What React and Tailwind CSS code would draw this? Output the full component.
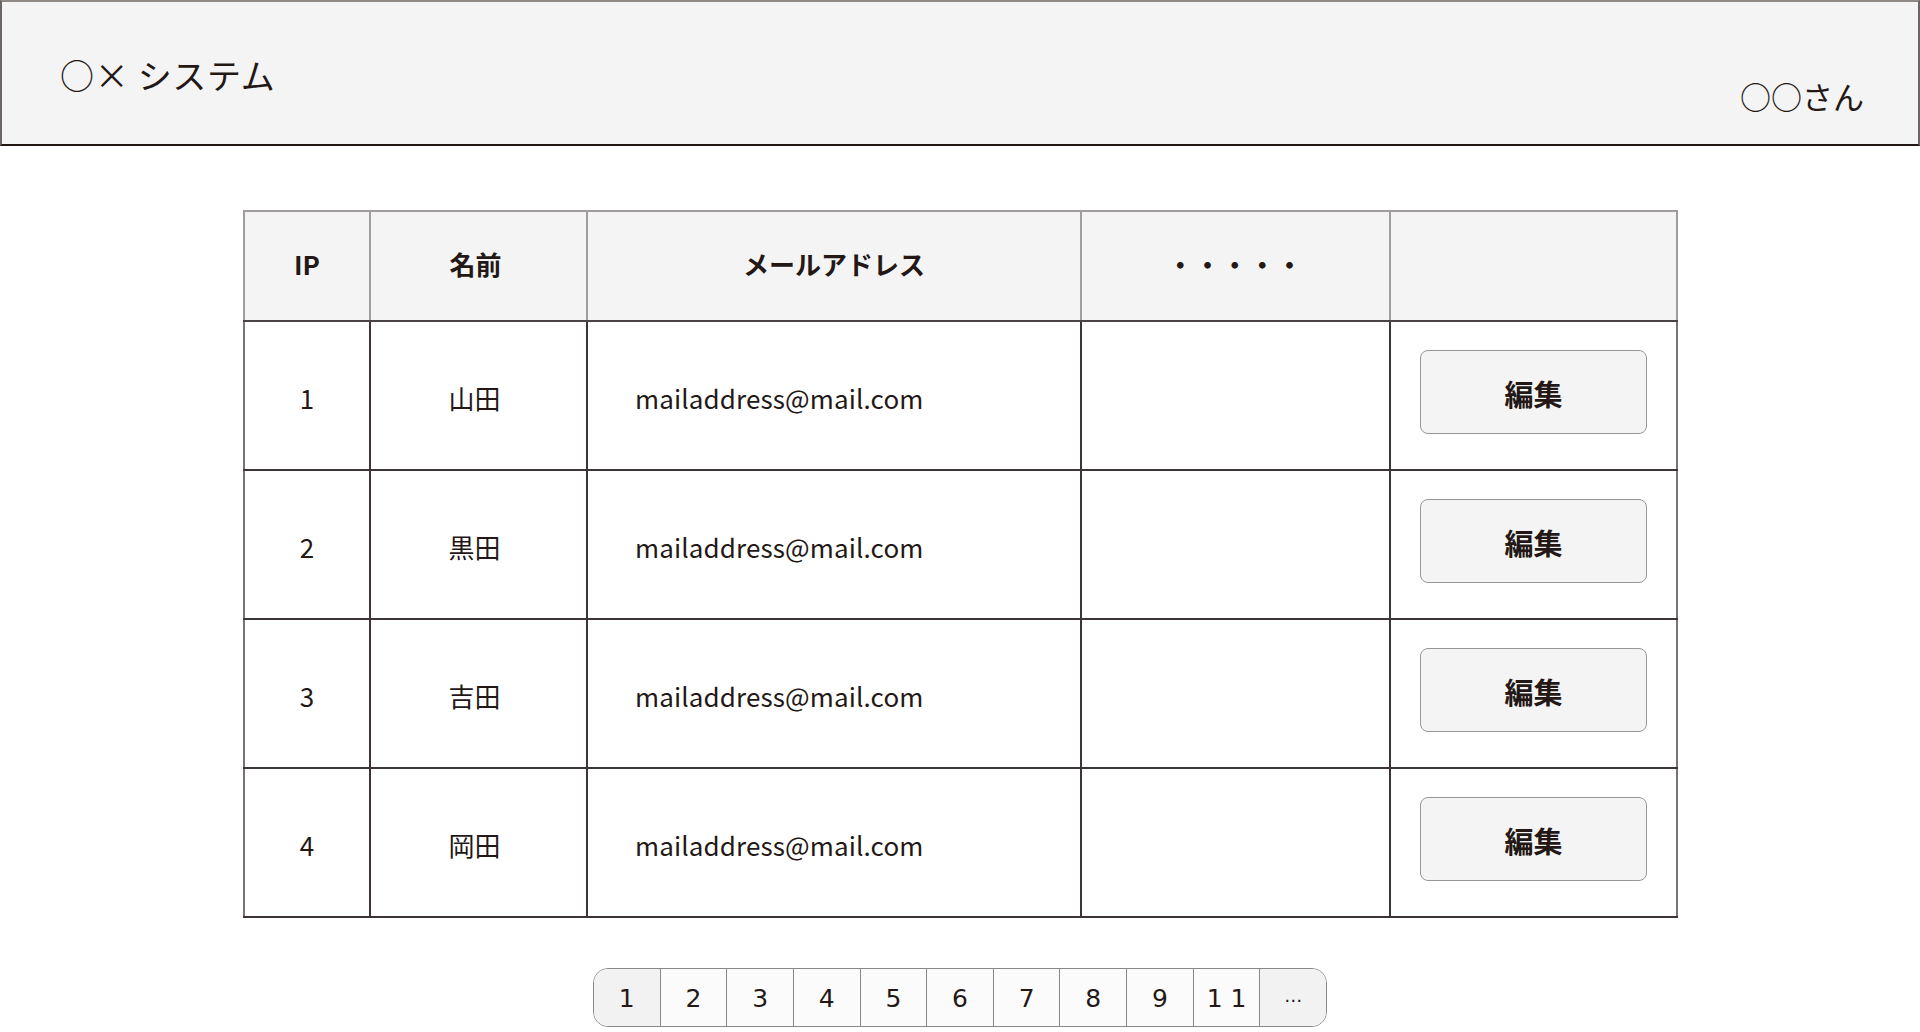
const font = { fontFamily: '"Noto Sans CJK JP", "Noto Sans", sans-serif' };

const users = [
  { id: 1, name: "山田", email: "mailaddress@mail.com" },
  { id: 2, name: "黒田", email: "mailaddress@mail.com" },
  { id: 3, name: "吉田", email: "mailaddress@mail.com" },
  { id: 4, name: "岡田", email: "mailaddress@mail.com" },
];

const pages = ["1", "2", "3", "4", "5", "6", "7", "8", "9", "1 1", "…"];

export default function App() {
  return (
    <div className="min-h-screen bg-white text-[#231815]" style={font}>
      {/* Header */}
      <header className="h-[146px] w-[1920px] bg-[#f4f4f4] border-t-2 border-l-2 border-t-[#8f8a86] border-l-[#6b6563] border-r-2 border-r-[#6b6563] border-b-2 border-b-[#231815] flex items-start justify-between">
        <div className="text-[34px] leading-none pl-[58px] pt-[56px] tracking-[0.02em]">
          ○× システム
        </div>
        <div className="text-[31px] leading-none pr-[54px] pt-[78px]">○○さん</div>
      </header>

      {/* Table */}
      <div className="pl-[243px] pt-[64px]">
        <table className="border-collapse table-fixed w-[1433px]">
          <colgroup>
            <col className="w-[126px]" />
            <col className="w-[217px]" />
            <col className="w-[494px]" />
            <col className="w-[309px]" />
            <col className="w-[287px]" />
          </colgroup>
          <thead>
            <tr className="h-[110px] bg-[#f4f4f4] text-[26px] font-bold">
              <th className="border-2 border-[#a09d9c] border-b-[#4a4444] pb-[5px]">IP</th>
              <th className="border-2 border-[#a09d9c] border-b-[#4a4444] pb-[5px] pr-[6px]">名前</th>
              <th className="border-2 border-[#a09d9c] border-b-[#4a4444] pb-[5px]">メールアドレス</th>
              <th className="border-2 border-[#a09d9c] border-b-[#4a4444] pb-[5px] tracking-[0.05em]">・・・・・</th>
              <th className="border-2 border-[#a09d9c] border-b-[#4a4444]"></th>
            </tr>
          </thead>
          <tbody className="text-[26px]">
            {users.map((u, i) => (
              <tr
                key={u.id}
                className={`h-[149px] ${i === users.length - 1 ? "border-b-2 border-b-[#807b7a]" : ""}`}
              >
                <td className="text-center pt-[3px] border-2 border-[#3d3535] border-l-[#7a7474]">{u.id}</td>
                <td className="text-center pt-[3px] pr-[8px] border-2 border-[#3d3535]">{u.name}</td>
                <td className="pl-[47px] pt-[3px] border-2 border-[#3d3535] tracking-[0.005em]">{u.email}</td>
                <td className="border-2 border-[#3d3535]"></td>
                <td className="border-2 border-[#3d3535] border-r-[#7a7474]">
                  <div className="flex justify-center pb-[8px]">
                    <button
                      type="button"
                      className="w-[227px] h-[84px] rounded-[8px] border-[1.5px] border-[#9a9696] bg-[#f4f4f4] text-[29px] font-bold leading-none pt-[4px]"
                      style={font}
                    >
                      編集
                    </button>
                  </div>
                </td>
              </tr>
            ))}
          </tbody>
        </table>
      </div>

      {/* Pagination */}
      <div className="pt-[50px] pl-[593px]">
        <div
          className="flex w-[734px] h-[59px] rounded-[15px] border-[1.5px] border-[#8a8787] overflow-hidden text-[25px] leading-none"
          style={{ fontFamily: '"DejaVu Sans", sans-serif' }}
        >
          {pages.map((p, i) => (
            <div
              key={p}
              className={`flex-1 flex items-center justify-center pt-[2px] ${i > 0 ? "border-l border-[#8a8787]" : ""} ${
                i === 0 || i === pages.length - 1 ? "bg-[#f2f2f2]" : "bg-[#fbfbfb]"
              } ${i === pages.length - 1 ? "text-[18px] pb-[6px]" : ""}`}
            >
              {p}
            </div>
          ))}
        </div>
      </div>
    </div>
  );
}
